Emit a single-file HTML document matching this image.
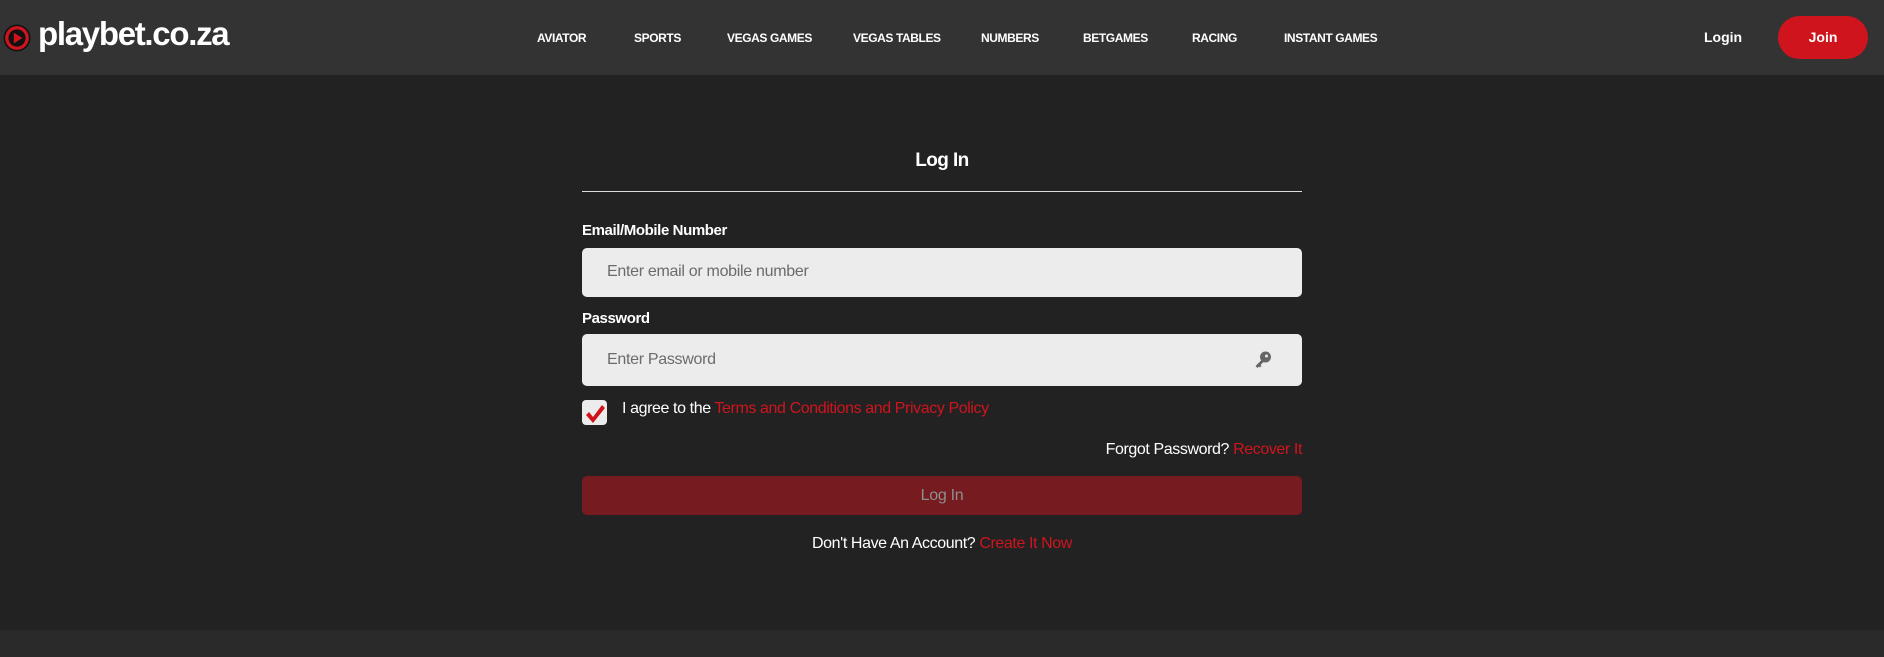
<!DOCTYPE html>
<html><head><meta charset="utf-8"><style>
*{margin:0;padding:0;box-sizing:border-box}
body{width:1884px;height:657px;background:#222;font-family:"Liberation Sans",sans-serif;position:relative;overflow:hidden;color:#fff}
.hdr{position:absolute;left:0;top:0;width:1884px;height:75px;background:#333}
.abs{position:absolute;white-space:nowrap}
.nav{font-size:12px;font-weight:bold;letter-spacing:-0.4px;top:31px}
.lbl{font-size:15px;font-weight:bold;letter-spacing:-0.4px}
.inp{position:absolute;left:582px;width:720px;background:#ececec;border-radius:5px}
.ph{position:absolute;left:25px;font-size:16px;color:#6b6b6b;letter-spacing:-0.3px}
.red{color:#d0141e}
.foot{position:absolute;left:0;top:630px;width:1884px;height:27px;background:#2a2a2a}
</style></head><body>
<div class="hdr"></div>
<svg class="abs" style="left:3px;top:24px" width="28" height="28" viewBox="0 0 26 26"><circle cx="13" cy="13" r="12.5" fill="#111"/><circle cx="13" cy="13" r="11" fill="#d0141e"/><circle cx="13" cy="13" r="8" fill="#111"/><path d="M10 8 L18 13 L10 18Z" fill="#d0141e"/></svg>
<div class="abs" style="left:38px;top:15px;font-size:33px;font-weight:bold;letter-spacing:-1.3px">playbet.co.za</div>
<div class="abs nav" style="left:537px">AVIATOR</div>
<div class="abs nav" style="left:634px">SPORTS</div>
<div class="abs nav" style="left:727px">VEGAS GAMES</div>
<div class="abs nav" style="left:853px">VEGAS TABLES</div>
<div class="abs nav" style="left:981px">NUMBERS</div>
<div class="abs nav" style="left:1083px">BETGAMES</div>
<div class="abs nav" style="left:1192px">RACING</div>
<div class="abs nav" style="left:1284px">INSTANT GAMES</div>
<div class="abs" style="left:1704px;top:29px;font-size:14px;font-weight:bold">Login</div>
<div class="abs" style="left:1778px;top:16px;width:90px;height:43px;border-radius:22px;background:#d0141e;font-size:14px;font-weight:bold;text-align:center;line-height:43px">Join</div>

<div class="abs" style="left:582px;width:720px;top:150px;text-align:center;font-size:19px;font-weight:bold;letter-spacing:-0.6px">Log In</div>
<div class="abs" style="left:582px;width:720px;top:191px;height:1px;background:#ddd"></div>
<div class="abs lbl" style="left:582px;top:222px">Email/Mobile Number</div>
<div class="inp" style="top:248px;height:49px"><div class="ph" style="top:15px">Enter email or mobile number</div></div>
<div class="abs lbl" style="left:582px;top:310px">Password</div>
<div class="inp" style="top:334px;height:52px"><div class="ph" style="top:17px">Enter Password</div>
<svg style="position:absolute;left:671px;top:16px" width="20" height="20" viewBox="0 0 20 20"><circle cx="12.5" cy="7" r="5.5" fill="#666"/><circle cx="13.5" cy="6" r="1.5" fill="#ececec"/><path d="M9 9.5 L2.5 16 L4.5 18 L6 16.5 L7 17.5 L8.5 16 L7.5 15 L11 11.5Z" fill="#666"/></svg></div>
<div class="abs" style="left:582px;top:400px;width:25px;height:25px;background:#ececec;border-radius:4px"></div>
<svg class="abs" style="left:584px;top:403px" width="22" height="22" viewBox="0 0 22 22"><path d="M2 12 L5 9 L9 14 L18 2 L21 5 L9 20Z" fill="#d0141e"/></svg>
<div class="abs" style="left:622px;top:400px;font-size:16px;letter-spacing:-0.4px">I agree to the <span class="red">Terms and Conditions and Privacy Policy</span></div>
<div class="abs" style="right:582px;top:441px;font-size:16px;letter-spacing:-0.4px">Forgot Password? <span class="red">Recover It</span></div>
<div class="abs" style="left:582px;top:476px;width:720px;height:39px;background:#761b20;border-radius:5px;text-align:center;line-height:39px;font-size:16px;color:#8f8f8f;letter-spacing:-0.3px">Log In</div>
<div class="abs" style="left:582px;width:720px;top:535px;text-align:center;font-size:16px;letter-spacing:-0.4px">Don't Have An Account? <span class="red">Create It Now</span></div>
<div class="foot"></div>
</body></html>
